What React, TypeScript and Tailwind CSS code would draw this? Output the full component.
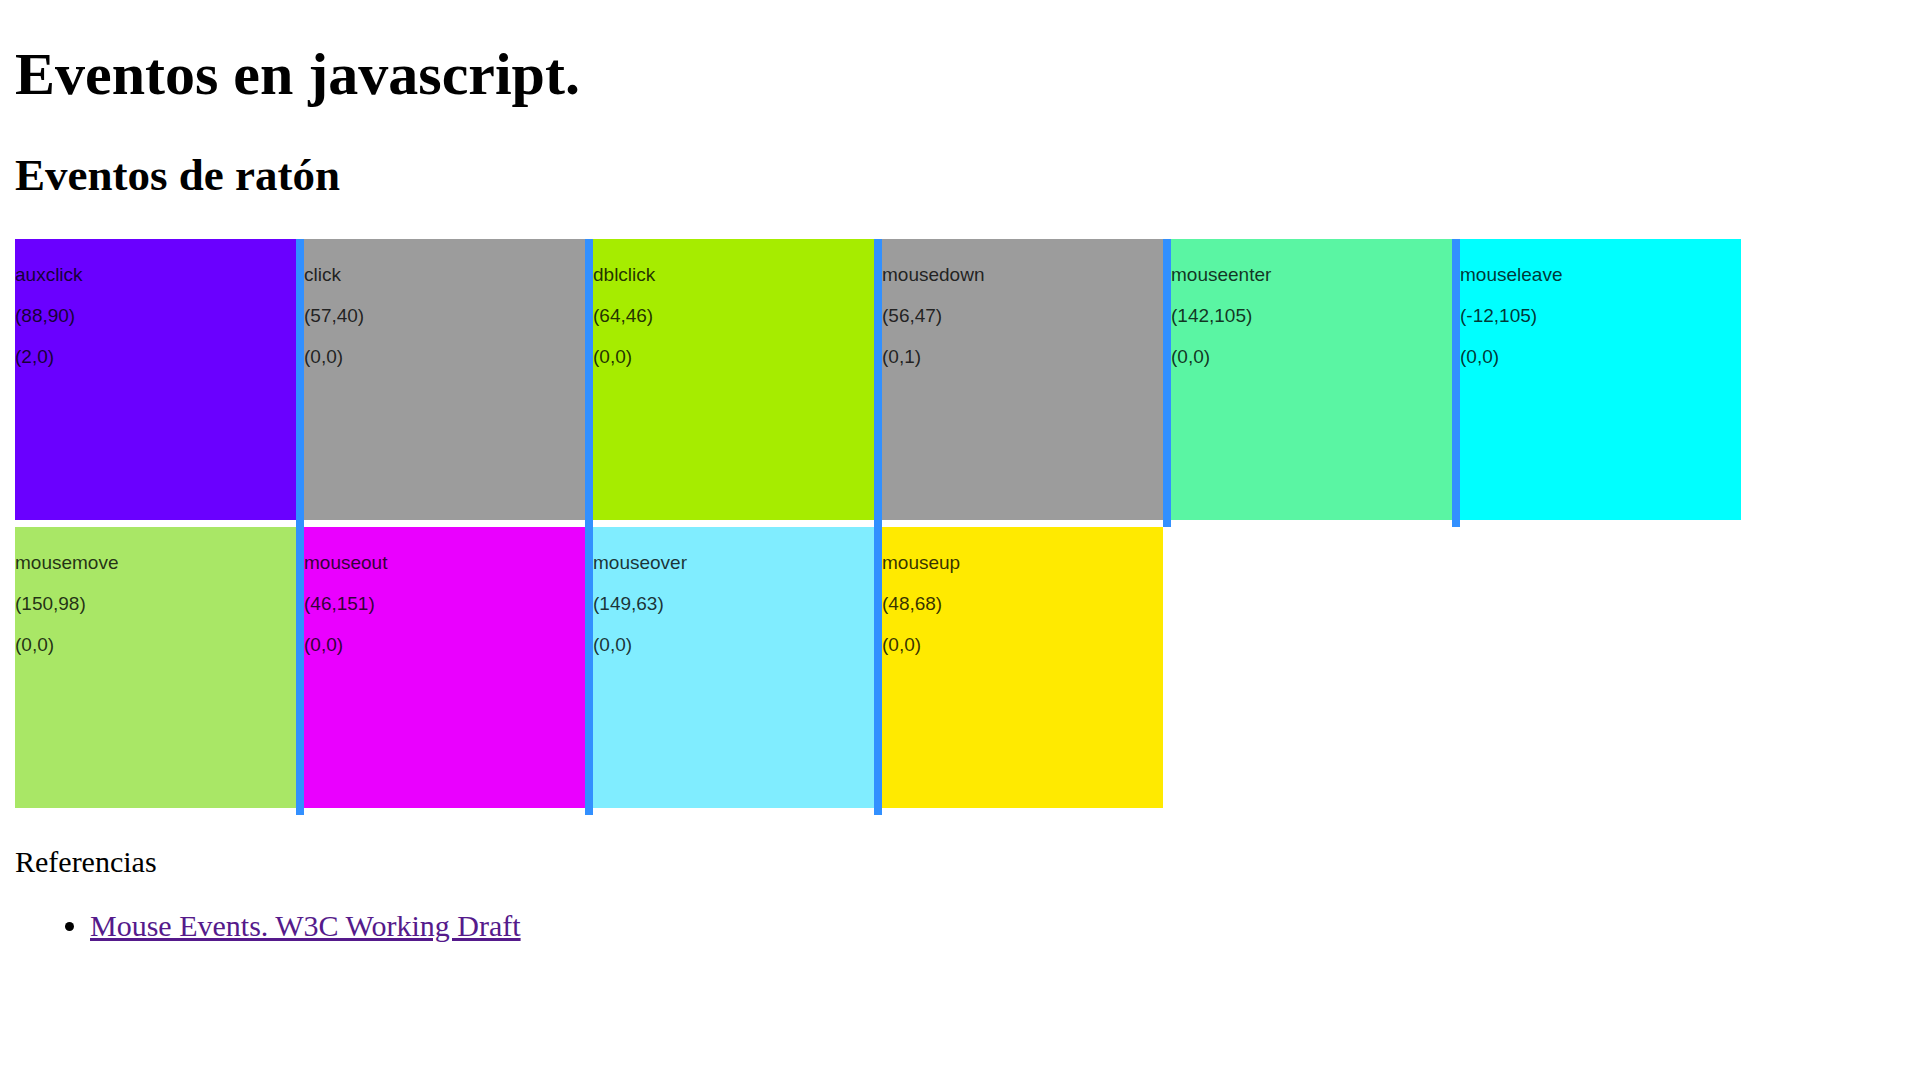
type MouseTile = {
  event: string;
  position: string;
  buttons: string;
  color: string;
};

const tiles: MouseTile[] = [
  { event: 'auxclick', position: '(88,90)', buttons: '(2,0)', color: 'bg-[#6a00ff]' },
  { event: 'click', position: '(57,40)', buttons: '(0,0)', color: 'bg-[#9c9c9c]' },
  { event: 'dblclick', position: '(64,46)', buttons: '(0,0)', color: 'bg-[#a6ec00]' },
  { event: 'mousedown', position: '(56,47)', buttons: '(0,1)', color: 'bg-[#9c9c9c]' },
  { event: 'mouseenter', position: '(142,105)', buttons: '(0,0)', color: 'bg-[#5af5a3]' },
  { event: 'mouseleave', position: '(-12,105)', buttons: '(0,0)', color: 'bg-[#00ffff]' },
  { event: 'mousemove', position: '(150,98)', buttons: '(0,0)', color: 'bg-[#a9e766]' },
  { event: 'mouseout', position: '(46,151)', buttons: '(0,0)', color: 'bg-[#ea00ff]' },
  { event: 'mouseover', position: '(149,63)', buttons: '(0,0)', color: 'bg-[#80edff]' },
  { event: 'mouseup', position: '(48,68)', buttons: '(0,0)', color: 'bg-[#ffea00]' },
];

function Tile({ event, position, buttons, color }: MouseTile) {
  return (
    <div className="border-l-8 border-[#3290ff] pb-[7px]">
      <div
        className={`size-[281px] pt-[15px] font-['Liberation_Sans',Arial,sans-serif] text-[19px] leading-[41px] text-black/80 ${color}`}
      >
        <p>{event}</p>
        <p>{position}</p>
        <p>{buttons}</p>
      </div>
    </div>
  );
}

export default function App() {
  return (
    <main className="min-h-screen bg-white px-[15px] py-10 font-['Liberation_Serif','Times_New_Roman',serif] text-[30px] leading-[34px] text-black">
      <h1 className="mb-10 text-[60px] leading-[69px] font-bold">Eventos en javascript.</h1>
      <h2 className="mb-[38px] text-[45px] leading-[52px] font-bold">Eventos de ratón</h2>
      {/* The negative margin clips the separator in front of the first tile of each row. */}
      <section className="overflow-hidden">
        <div className="-ml-2 flex flex-wrap">
          {tiles.map((tile) => (
            <Tile key={tile.event} {...tile} />
          ))}
        </div>
      </section>
      <p className="my-[30px]">Referencias</p>
      <ul className="list-disc pl-[75px]">
        <li>
          <a
            href="#mouse-events"
            className="text-[#551a8b] underline decoration-[3px] underline-offset-2"
          >
            Mouse Events. W3C Working Draft
          </a>
        </li>
      </ul>
    </main>
  );
}
